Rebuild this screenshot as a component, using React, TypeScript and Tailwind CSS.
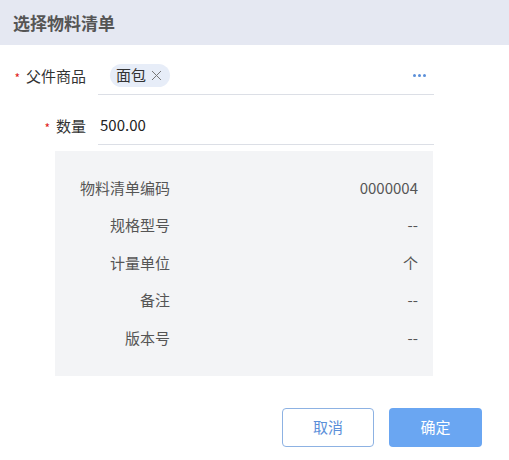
const font = { fontFamily: '"Noto Sans CJK SC", "Noto Sans", sans-serif' };

const details = [
  { label: "物料清单编码", value: "0000004" },
  { label: "规格型号", value: "--" },
  { label: "计量单位", value: "个" },
  { label: "备注", value: "--" },
  { label: "版本号", value: "--" },
];

export default function App() {
  return (
    <div className="w-[509px] h-[460px] bg-white text-[#333]" style={font}>
      <div className="h-[45px] bg-[#e5e8f2] flex items-center px-[13px]">
        <h2 className="text-[17px] font-bold text-[#555]">选择物料清单</h2>
      </div>

      <div className="flex items-center mt-[12px] h-[38px]">
        <div className="w-[98px] flex justify-end items-center pr-[12px] text-[15px] text-[#333]">
          <span className="text-[#e02020] text-[12px] mr-[6px] translate-y-[2px]">*</span>
          父件商品
        </div>
        <div className="w-[336px] h-[38px] border-b border-[#dcdfe6] flex items-center justify-between pl-[12px] pr-[8px]">
          <span className="h-[23px] rounded-full bg-[#e7edf8] flex items-center pl-[6px] pr-[8px] text-[15px] text-[#333]">
            面包
            <svg className="ml-[5px]" width="11" height="11" viewBox="0 0 11 11">
              <path d="M1 1L10 10M10 1L1 10" stroke="#777" strokeWidth="1" />
            </svg>
          </span>
          <span className="flex gap-[2px]">
            <span className="w-[3px] h-[3px] rounded-full bg-[#5b8fd9]" />
            <span className="w-[3px] h-[3px] rounded-full bg-[#5b8fd9]" />
            <span className="w-[3px] h-[3px] rounded-full bg-[#5b8fd9]" />
          </span>
        </div>
      </div>

      <div className="flex items-center mt-[12px] h-[38px]">
        <div className="w-[98px] flex justify-end items-center pr-[12px] text-[15px]">
          <span className="text-[#e02020] text-[12px] mr-[6px] translate-y-[2px]">*</span>
          数量
        </div>
        <div className="w-[336px] h-[38px] border-b border-[#dcdfe6] flex items-center pl-[2px] text-[15px] text-[#222]">
          500.00
        </div>
      </div>

      <div className="ml-[55px] mt-[6px] w-[378px] h-[225px] bg-[#f3f4f6] pt-[18px] text-[15px] text-[#555]">
        {details.map((d) => (
          <div key={d.label} className="flex items-center h-[37.5px]">
            <div className="w-[115px] text-right">{d.label}</div>
            <div className="flex-1 text-right pr-[15px]">{d.value}</div>
          </div>
        ))}
      </div>

      <div className="flex justify-end gap-[15px] mt-[32px] pr-[27px]">
        <button className="w-[92px] h-[39px] rounded-[4px] border border-[#8db2e3] text-[#5b8fd9] text-[15px]">
          取消
        </button>
        <button className="w-[93px] h-[39px] rounded-[4px] bg-[#6aa6f2] text-white text-[15px]">
          确定
        </button>
      </div>
    </div>
  );
}
